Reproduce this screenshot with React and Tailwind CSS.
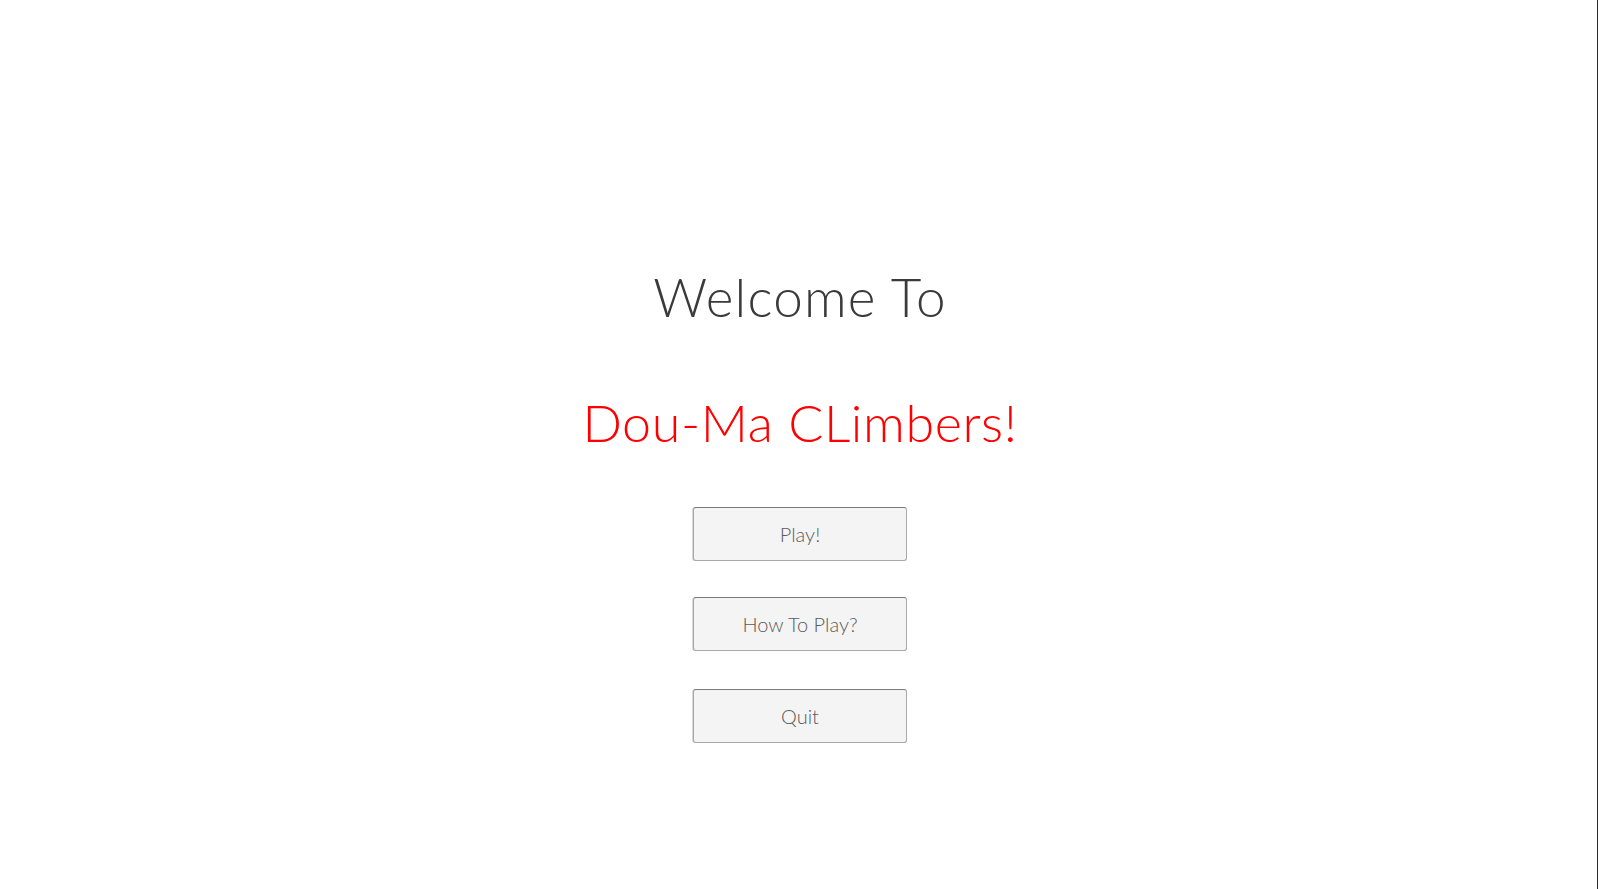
const MenuButton = ({ children }) => (
  <button className="w-[214px] h-[54px] bg-[#f4f4f4] border border-[#a8a8a8] border-t-[#7a7a7a] rounded-[3px] text-[20px] font-light text-[#5a5a5a] shadow-[-1px_0_0_#d6d6d6]">
    {children}
  </button>
);

const App = () => {
  return (
    <div className="h-screen w-full flex bg-white overflow-hidden" style={{ fontFamily: 'Lato, "Open Sans", sans-serif' }}>
      {/* Main menu */}
      <div className="flex-1 flex flex-col items-center pt-[270px] pl-[3px]">
        <h1 className="text-[53px] font-light leading-none text-[#3a3a3a] tracking-[1.2px]">Welcome To</h1>
        <h1 className="mt-[73px] text-[52px] font-light leading-none text-[#ff0000] tracking-[0.6px]">Dou-Ma CLimbers!</h1>

        <div className="mt-[59px] flex flex-col items-center">
          <MenuButton>Play!</MenuButton>
          <div className="mt-[36px]">
            <MenuButton>How To Play?</MenuButton>
          </div>
          <div className="mt-[38px]">
            <MenuButton>Quit</MenuButton>
          </div>
        </div>
      </div>

      {/* Window edge */}
      <div className="w-px bg-[#2a2a2a]" />
      <div className="w-px bg-white" />
    </div>
  );
};

export default App;
